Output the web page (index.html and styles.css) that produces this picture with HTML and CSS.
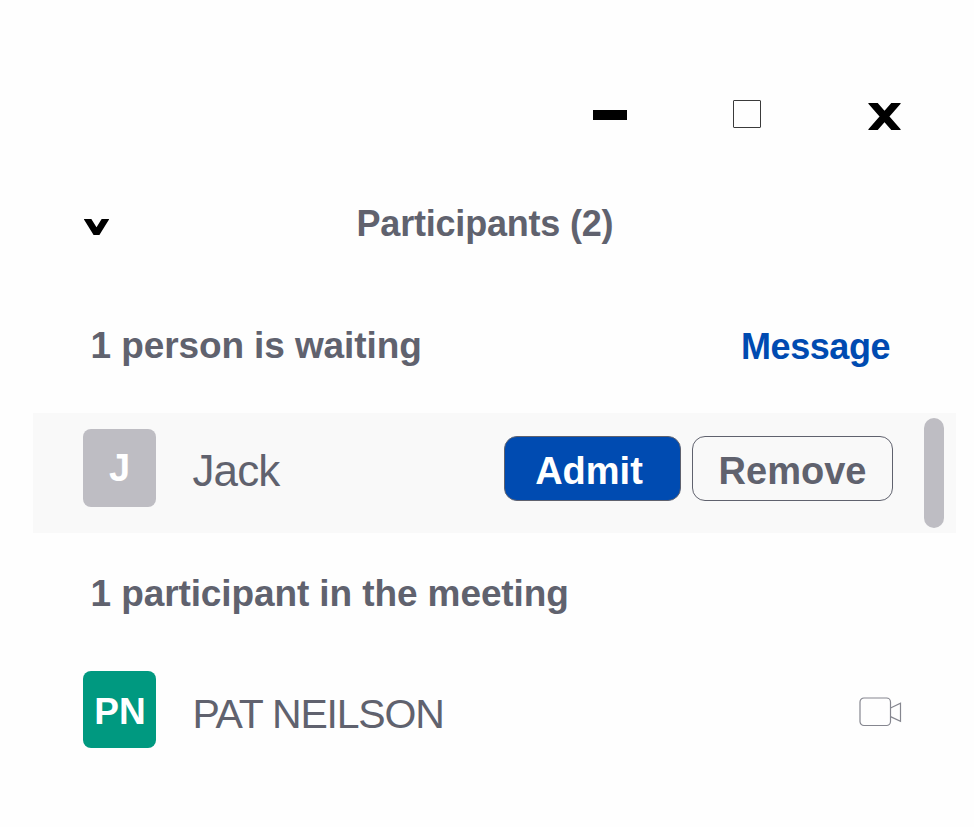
FILE: index.html
```
<!DOCTYPE html>
<html lang="en">
<head>
    <meta charset="UTF-8">
    <meta name="viewport" content="width=device-width, initial-scale=1.0">
    <title>Participants</title>
    <link rel="stylesheet" href="styles.css">
</head>
<body>
    <div class="window">
        <!-- Window controls -->
        <div class="controls">
            <span class="minimize"></span>
            <span class="maximize"></span>
            <svg class="close" viewBox="0 0 33 27">
                <path d="M3 -2 L30 29 M30 -2 L3 29"/>
            </svg>
        </div>

        <div class="header">
            <svg class="chevron" viewBox="0 0 25 16">
                <path d="M2.6 -1.5 L12.5 14.5 L22.4 -1.5"/>
            </svg>
            <h1>Participants (2)</h1>
        </div>

        <!-- Waiting room -->
        <div class="section-title">
            <h2>1 person is waiting</h2>
            <a class="message">Message</a>
        </div>
        <div class="person waiting">
            <div class="avatar">J</div>
            <div class="name jack">Jack</div>
            <div class="buttons">
                <button class="admit">Admit</button>
                <button class="remove">Remove</button>
            </div>
            <div class="scrollbar"></div>
        </div>

        <!-- In the meeting -->
        <div class="section-title meeting-title">
            <h2>1 participant in the meeting</h2>
        </div>
        <div class="person">
            <div class="avatar green">PN</div>
            <div class="name pat">PAT NEILSON</div>
            <svg class="camera" viewBox="0 0 43 30">
                <rect x="1" y="1" width="30.5" height="27.5" rx="4"/>
                <path d="M31.5 11 L41.5 6.3 V24.3 L31.5 19.6"/>
            </svg>
        </div>
    </div>
</body>
</html>
```

FILE: styles.css
```
body {
    font-family: "Liberation Sans", Arial, sans-serif;
    margin: 0;
    background-color: #fefefe;
    color: #60626e;
}
.window {
    box-sizing: border-box;
    height: 827px;
    padding: 75px 18px 0 32.5px;
    overflow: hidden;
}
h1, h2 {
    margin: 0;
    font-weight: bold;
}
/* Window controls */
.controls {
    display: flex;
    align-items: center;
    justify-content: flex-end;
    height: 80px;
    padding-right: 55px;
}
.minimize {
    width: 34px;
    height: 10px;
    background: #000;
    margin-right: 106px;
}
.maximize {
    box-sizing: border-box;
    width: 28px;
    height: 28px;
    border: 1px solid #3a3a3a;
    border-radius: 1px;
    margin-right: 107px;
    margin-top: -2px;
}
.close {
    width: 33px;
    height: 27px;
    margin-top: 3px;
}
.close path,
.chevron path {
    fill: none;
    stroke: #000;
    stroke-width: 7.5px;
}
.header {
    display: grid;
    grid-template-columns: 273px 1fr;
    align-items: center;
    height: 135px;
    padding-left: 51px;
}
.header h1 {
    font-size: 36px;
    line-height: 40px;
    letter-spacing: -0.2px;
    padding-top: 2px;
}
.chevron {
    width: 25px;
    height: 16px;
    margin-top: 9px;
}
.chevron path {
    stroke-width: 6.5px;
}
.section-title {
    display: flex;
    justify-content: space-between;
    align-items: center;
    height: 110px;
    padding: 0 66px 13px 58px;
}
.section-title h2 {
    font-size: 37px;
    line-height: 40px;
    letter-spacing: -0.1px;
    padding-top: 2px;
}
.message {
    color: #004bb1;
    font-size: 36px;
    font-weight: bold;
    line-height: 40px;
    letter-spacing: -0.45px;
    margin-top: 3px;
}
/* People rows */
.person {
    box-sizing: border-box;
    display: flex;
    align-items: center;
    height: 120px;
    padding-left: 50.5px;
}
.waiting {
    background: #f9f9f9;
    padding-bottom: 10px;
}
.avatar {
    width: 73px;
    height: 77.5px;
    border-radius: 8px;
    background: #bebdc3;
    color: #fff;
    font-size: 38px;
    font-weight: bold;
    line-height: 78px;
    text-align: center;
}
.green {
    background: #009980;
    font-size: 37px;
    line-height: 82px;
    text-indent: 1px;
}
.name {
    margin-left: 36.5px;
    line-height: 50px;
}
.jack {
    font-size: 44px;
    margin-top: 6px;
    letter-spacing: -0.9px;
}
.pat {
    font-size: 41px;
    margin-top: 9px;
    letter-spacing: -1.2px;
}
.buttons {
    display: flex;
    gap: 11px;
    margin-left: auto;
}
.buttons button {
    box-sizing: border-box;
    height: 65px;
    padding: 7px 0 0;
    border: 1px solid #60626e;
    border-radius: 13px;
    font-family: inherit;
    font-size: 38px;
    font-weight: bold;
}
.admit {
    width: 177px;
    background: #004bb1;
    color: #fff;
}
.buttons .admit {
    padding-right: 7px;
}
.remove {
    width: 201px;
    background: #f9f9f9;
    color: #60626e;
}
.scrollbar {
    width: 20px;
    height: 110px;
    border-radius: 10px;
    background: #bebdc3;
    margin: 9px 12px 0 31px;
}
.meeting-title {
    height: 105px;
    padding-bottom: 0;
    margin-top: 7px;
}
.meeting-title + .person {
    margin-top: 4.5px;
}
.camera {
    width: 43px;
    height: 30px;
    margin-top: 5px;
    margin-left: auto;
    margin-right: 54px;
}
.camera rect,
.camera path {
    fill: none;
    stroke: #85868f;
    stroke-width: 1.2px;
}
```
